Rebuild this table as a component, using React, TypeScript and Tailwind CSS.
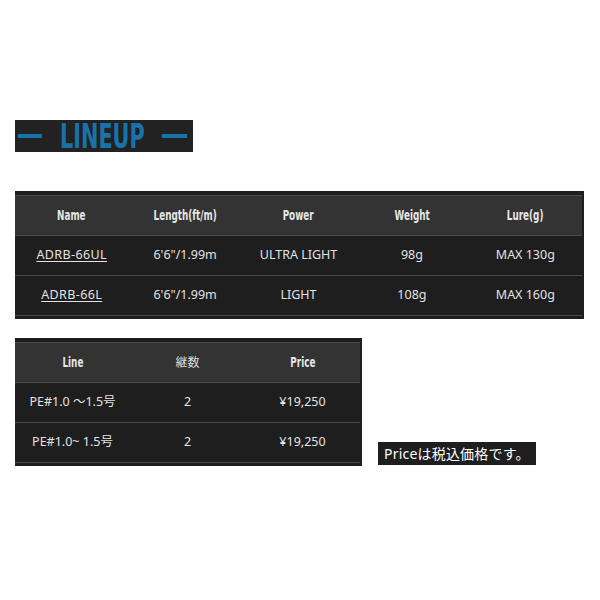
const body = { fontFamily: '"Noto Sans", "Noto Sans CJK JP", sans-serif' };
const cond = { fontFamily: '"DejaVu Sans Condensed", "DejaVu Sans", sans-serif', fontStretch: "condensed" as const };

const specHead = ["Name", "Length(ft/m)", "Power", "Weight", "Lure(g)"];
const specRows = [
  ["ADRB-66UL", `6'6"/1.99m`, "ULTRA LIGHT", "98g", "MAX 130g"],
  ["ADRB-66L", `6'6"/1.99m`, "LIGHT", "108g", "MAX 160g"],
];

const priceHead = ["Line", "継数", "Price"];
const priceRows = [
  ["PE#1.0 〜1.5号", "2", "¥19,250"],
  ["PE#1.0~ 1.5号", "2", "¥19,250"],
];

function HeadCell({ label }: { label: string }) {
  return (
    <div className="flex-1 flex items-center justify-center">
      {label === "継数" ? (
        <span className="text-[12px] text-[#dcdcdc]" style={body}>{label}</span>
      ) : (
        <span className="inline-block text-[14px] font-bold text-[#e6e6e6] scale-x-[0.7]" style={cond}>
          {label}
        </span>
      )}
    </div>
  );
}

function Table({ head, rows, link }: { head: string[]; rows: string[][]; link?: boolean }) {
  return (
    <div className="bg-[#1e1e1e] pt-[4px] pb-[3px] pr-[2px]">
      <div className="flex h-[41px] bg-[#333333] border-y border-[#4a4a4a]">
        {head.map((h) => (
          <HeadCell key={h} label={h} />
        ))}
      </div>
      {rows.map((r, i) => (
        <div key={i} className="flex h-[40px] border-b border-[#4a4a4a]">
          {r.map((c, j) => (
            <div key={j} className="flex-1 flex items-center justify-center text-[12.5px] text-[#e2e2e2]" style={body}>
              {link && j === 0 ? (
                <span className="underline underline-offset-2 tracking-[0.4px]">{c}</span>
              ) : (
                c
              )}
            </div>
          ))}
        </div>
      ))}
    </div>
  );
}

export default function App() {
  return (
    <div className="w-[600px] h-[600px] bg-white pt-[120px] px-[15px]">
      {/* Section title */}
      <div className="flex items-center w-[178px] h-[32px] bg-[#222222] pl-[3px]">
        <div className="w-[24px] h-[4px] bg-[#1a72ad]" />
        <div className="w-[85px] ml-[18px] h-[32px] flex items-center">
          <span
            className="inline-block origin-left scale-x-[0.68] text-[34px] font-bold leading-none text-[#1a72ad] whitespace-nowrap"
            style={cond}
          >
            LINEUP
          </span>
        </div>
        <div className="w-[25px] h-[4px] bg-[#1a72ad] ml-[17px]" />
      </div>

      <div className="mt-[39px] w-[569px]">
        <Table head={specHead} rows={specRows} link />
      </div>

      <div className="mt-[19px] flex items-end gap-[16px]">
        <div className="w-[347px]">
          <Table head={priceHead} rows={priceRows} />
        </div>
        <div
          className="mb-[1px] h-[23px] px-[6px] flex items-center bg-[#1e1e1e] text-white text-[14px] tracking-[0.2px]"
          style={body}
        >
          Priceは税込価格です。
        </div>
      </div>
    </div>
  );
}
